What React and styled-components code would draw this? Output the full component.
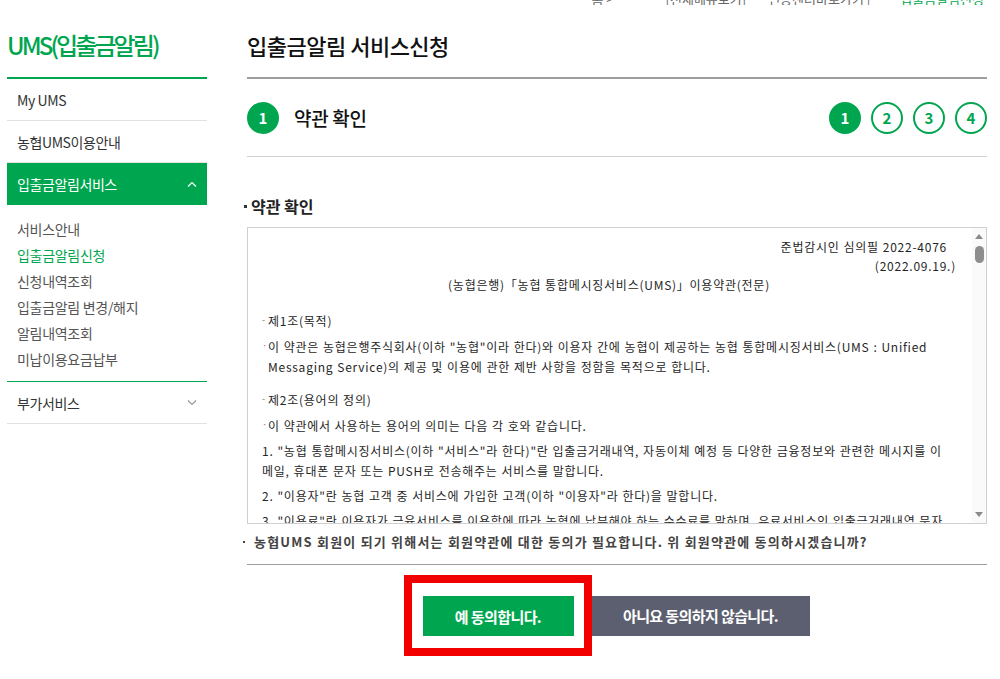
import React from "react";
import styled, { createGlobalStyle } from "styled-components";

const GREEN = "#00a64f";

const GlobalStyle = createGlobalStyle`
  html, body {
    margin: 0;
    padding: 0;
    background: #fff;
  }
  body {
    font-family: "Noto Sans CJK KR", "Noto Sans", sans-serif;
    color: #333;
  }
  * {
    box-sizing: border-box;
  }
`;

const TopBar = styled.div`
  height: 5px;
  overflow: hidden;
  display: flex;
  align-items: flex-end;
  justify-content: flex-end;
  padding-right: 16px;
  font-size: 13px;
  line-height: 13px;
`;
const TopLink = styled.span`
  color: ${(p) => (p.$green ? GREEN : "#666")};
  margin-left: ${(p) => p.$gap || 20}px;
  white-space: nowrap;
`;

const Page = styled.div`
  display: flex;
  align-items: flex-start;
  padding-left: 7px;
  gap: 40px;
`;

const Sidebar = styled.aside`
  width: 200px;
  flex: none;
`;
const SideTitle = styled.h2`
  margin: 0;
  height: 74px;
  padding-top: 6px;
  display: flex;
  align-items: center;
  border-bottom: 2px solid ${GREEN};
  font-size: 24px;
  font-weight: 500;
  letter-spacing: -2.9px;
  color: ${GREEN};
`;
const MenuRow = styled.div`
  height: 42px;
  display: flex;
  align-items: center;
  justify-content: space-between;
  padding: 0 10px 0 10px;
  font-size: 14px;
  letter-spacing: -0.4px;
  color: ${(p) => (p.$active ? "#fff" : "#333")};
  background: ${(p) => (p.$active ? GREEN : "transparent")};
  border-bottom: ${(p) => (p.$active ? "none" : "1px solid #e2e2e2")};
`;
const SubMenu = styled.ul`
  list-style: none;
  margin: 0;
  padding: 11px 10px 9px;
  border-bottom: 1px solid ${GREEN};
`;
const SubItem = styled.li`
  height: 26px;
  line-height: 26px;
  font-size: 14px;
  letter-spacing: -0.3px;
  color: ${(p) => (p.$current ? GREEN : "#555")};
`;

const Chevron = ({ up, color }) => (
  <svg width="10" height="6" viewBox="0 0 10 6" fill="none">
    <polyline
      points={up ? "1,5.5 5,1.5 9,5.5" : "1,0.5 5,4.5 9,0.5"}
      stroke={color}
      strokeWidth="1.2"
    />
  </svg>
);

const Main = styled.main`
  width: 740px;
  flex: none;
`;
const PageTitle = styled.h1`
  margin: 0;
  height: 74px;
  padding-top: 8px;
  display: flex;
  align-items: center;
  border-bottom: 2px solid #9e9e9e;
  font-size: 22px;
  font-weight: 500;
  letter-spacing: -0.5px;
  color: #111;
`;
const StepRow = styled.div`
  height: 78px;
  display: flex;
  align-items: center;
  justify-content: space-between;
  border-bottom: 1px solid #d0d0d0;
`;
const StepName = styled.div`
  display: flex;
  align-items: center;
  gap: 15px;
  font-size: 19px;
  font-weight: 500;
  letter-spacing: -0.3px;
  color: #111;
`;
const Steps = styled.div`
  display: flex;
  gap: 10px;
`;
const StepCircle = styled.span`
  width: 32px;
  height: 32px;
  border-radius: 50%;
  display: flex;
  align-items: center;
  justify-content: center;
  font-size: 15px;
  font-weight: 700;
  letter-spacing: 0;
  color: ${(p) => (p.$on ? "#fff" : GREEN)};
  background: ${(p) => (p.$on ? GREEN : "#fff")};
  border: 2px solid ${GREEN};
`;

const SectionTitle = styled.h3`
  margin: 39px 0 11px;
  line-height: 20px;
  font-size: 16px;
  font-weight: 700;
  color: #222;
  display: flex;
  align-items: center;
  gap: 4px;
  &::before {
    content: "";
    width: 3px;
    height: 3px;
    background: #333;
    margin-left: -3px;
  }
`;

const TermsBox = styled.div`
  height: 297px;
  border: 1px solid #cfcfcf;
  display: flex;
`;
const TermsText = styled.div`
  flex: 1;
  overflow: hidden;
  padding: 9px 16px 0 14px;
  font-size: 12px;
  color: #262626;
  white-space: nowrap;
  letter-spacing: 0.75px;
  word-spacing: 0.5px;
`;
const Head = styled.div`
  margin-bottom: 16px;
`;
const HeadLine = styled.div`
  line-height: 19px;
  text-align: ${(p) => p.$align};
  padding-right: ${(p) => p.$pr || 0}px;
`;
const Article = styled.div`
  margin-top: 12px;
`;
const Para = styled.p`
  margin: 0 0 5px;
  line-height: 20px;
  padding-left: ${(p) => (p.$bullet ? 6 : 0)}px;
  text-indent: ${(p) => (p.$bullet ? -6 : 0)}px;
`;
const Mark = styled.span`
  display: inline-block;
  width: 6px;
  text-indent: 0;
  letter-spacing: 0;
  color: #777;
  font-size: 9px;
  vertical-align: 3px;
`;

const ScrollBar = styled.div`
  width: 14px;
  flex: none;
  background: #fafafa;
  display: flex;
  flex-direction: column;
  align-items: center;
  padding: 6px 0 6px;
`;
const Arrow = styled.span`
  width: 0;
  height: 0;
  border-left: 4px solid transparent;
  border-right: 4px solid transparent;
  ${(p) =>
    p.$down
      ? "border-top: 5px solid #8a8a8a; margin-top: auto;"
      : "border-bottom: 5px solid #8a8a8a;"}
`;
const Thumb = styled.span`
  width: 9px;
  height: 17px;
  border-radius: 5px;
  background: #8e8e8e;
  margin-top: 7px;
`;

const Notice = styled.p`
  margin: 0;
  padding: 8px 0 12px;
  line-height: 20px;
  font-size: 13px;
  font-weight: 700;
  letter-spacing: 1.2px;
  color: #444;
  border-bottom: 1px solid #9e9e9e;
  display: flex;
  align-items: center;
  gap: 9px;
  &::before {
    content: "";
    width: 2px;
    height: 2px;
    background: #444;
    margin-left: -4px;
  }
`;

const ButtonRow = styled.div`
  display: flex;
  justify-content: center;
  align-items: center;
  margin-top: 10px;
  padding-right: 21px;
`;
const Highlight = styled.div`
  border: 8px solid #f20000;
  padding: 13px 10px 12px 11px;
`;
const Button = styled.button`
  height: 40px;
  width: ${(p) => p.$w}px;
  border: none;
  padding: 0;
  font-family: inherit;
  font-size: 15px;
  font-weight: 700;
  letter-spacing: -0.6px;
  color: #fff;
  background: ${(p) => (p.$gray ? "#5b5f70" : GREEN)};
  display: flex;
  align-items: center;
  justify-content: center;
`;

const subMenu = [
  "서비스안내",
  "입출금알림신청",
  "신청내역조회",
  "입출금알림 변경/해지",
  "알림내역조회",
  "미납이용요금납부",
];

export default function App() {
  return (
    <>
      <GlobalStyle />
      <TopBar>
        <TopLink>홈 &gt;</TopLink>
        <TopLink $gap={52}>[전체메뉴보기]</TopLink>
        <TopLink $gap={22}>인증센터바로가기 |</TopLink>
        <TopLink $green $gap={30}>입출금알림신청</TopLink>
      </TopBar>
      <Page>
        <Sidebar>
          <SideTitle>UMS(입출금알림)</SideTitle>
          <MenuRow>My UMS</MenuRow>
          <MenuRow>농협UMS이용안내</MenuRow>
          <MenuRow $active>
            입출금알림서비스
            <Chevron up color="#fff" />
          </MenuRow>
          <SubMenu>
            {subMenu.map((item) => (
              <SubItem key={item} $current={item === "입출금알림신청"}>
                {item}
              </SubItem>
            ))}
          </SubMenu>
          <MenuRow>
            부가서비스
            <Chevron color="#999" />
          </MenuRow>
        </Sidebar>

        <Main>
          <PageTitle>입출금알림 서비스신청</PageTitle>
          <StepRow>
            <StepName>
              <StepCircle $on>1</StepCircle>
              약관 확인
            </StepName>
            <Steps>
              {[1, 2, 3, 4].map((n) => (
                <StepCircle key={n} $on={n === 1}>
                  {n}
                </StepCircle>
              ))}
            </Steps>
          </StepRow>

          <SectionTitle>약관 확인</SectionTitle>
          <TermsBox>
            <TermsText>
              <Head>
                <HeadLine $align="right" $pr={9}>
                  준법감시인 심의필 2022-4076
                </HeadLine>
                <HeadLine $align="right">(2022.09.19.)</HeadLine>
                <HeadLine $align="center">
                  (농협은행)「농협 통합메시징서비스(UMS)」이용약관(전문)
                </HeadLine>
              </Head>
              <Article>
                <Para $bullet>
                  <Mark>-</Mark>제1조(목적)
                </Para>
                <Para $bullet>
                  <Mark>·</Mark>이 약관은 농협은행주식회사(이하 "농협"이라
                  한다)와 이용자 간에 농협이 제공하는 농협
                  통합메시징서비스(UMS : Unified
                  <br />
                  Messaging Service)의 제공 및 이용에 관한 제반 사항을 정함을
                  목적으로 합니다.
                </Para>
              </Article>
              <Article>
                <Para $bullet>
                  <Mark>-</Mark>제2조(용어의 정의)
                </Para>
                <Para $bullet>
                  <Mark>·</Mark>이 약관에서 사용하는 용어의 의미는 다음 각 호와
                  같습니다.
                </Para>
                <Para>
                  1. "농협 통합메시징서비스(이하 "서비스"라 한다)"란
                  입출금거래내역, 자동이체 예정 등 다양한 금융정보와 관련한
                  메시지를 이
                  <br />
                  메일, 휴대폰 문자 또는 PUSH로 전송해주는 서비스를 말합니다.
                </Para>
                <Para>
                  2. "이용자"란 농협 고객 중 서비스에 가입한 고객(이하
                  "이용자"라 한다)을 말합니다.
                </Para>
                <Para>
                  3. "이용료"란 이용자가 금융서비스를 이용함에 따라 농협에
                  납부해야 하는 수수료를 말하며, 유료서비스인 입출금거래내역
                  문자
                </Para>
              </Article>
            </TermsText>
            <ScrollBar>
              <Arrow />
              <Thumb />
              <Arrow $down />
            </ScrollBar>
          </TermsBox>

          <Notice>
            농협UMS 회원이 되기 위해서는 회원약관에 대한 동의가 필요합니다. 위
            회원약관에 동의하시겠습니까?
          </Notice>

          <ButtonRow>
            <Highlight>
              <Button $w={151}>예 동의합니다.</Button>
            </Highlight>
            <Button $gray $w={218}>
              아니요 동의하지 않습니다.
            </Button>
          </ButtonRow>
        </Main>
      </Page>
    </>
  );
}
